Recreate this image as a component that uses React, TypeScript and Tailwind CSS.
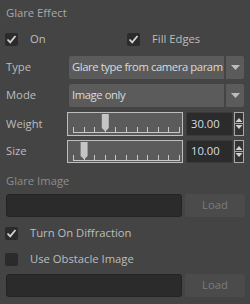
import React from "react";

const font = { fontFamily: '"Open Sans", "Liberation Sans", sans-serif' };

const Check = ({ checked }: { checked: boolean }) => (
  <div className="w-[13px] h-[13px] bg-[#2b2b2b] rounded-[2px] flex items-center justify-center shrink-0">
    {checked && (
      <svg width="11" height="11" viewBox="0 0 11 11">
        <path d="M1.5 5.5 L4.2 8.3 L9.5 2" fill="none" stroke="#d4d4d4" strokeWidth="1.8" />
      </svg>
    )}
  </div>
);

const Dropdown = ({ text }: { text: string }) => (
  <div className="flex gap-[2px] h-full ml-auto">
    <div className="w-[155px] bg-[#5b5b5b] rounded-l-[2px] pl-[3px] flex items-center overflow-hidden whitespace-nowrap text-[#dcdcdc] tracking-[-0.4px]">
      {text}
    </div>
    <div className="w-[18px] bg-[#5b5b5b] rounded-r-[2px] flex items-center justify-center">
      <svg width="9" height="5" viewBox="0 0 9 5">
        <path d="M0 0 H9 L4.5 5 Z" fill="#bdbdbd" />
      </svg>
    </div>
  </div>
);

const Slider = ({ value }: { value: number }) => {
  const ticks = Array.from({ length: 11 }, (_, i) => 5 + i * 10.6);
  const hx = 5.5 + (value / 100) * 106;
  return (
    <div className="w-[116px] h-full border border-[#bdbdbd] bg-[#5b5b5b] relative">
      <svg width="114" height="22" viewBox="0 0 114 22" className="absolute left-0 top-0">
        <line x1={ticks[0]} y1="19.5" x2={ticks[10] + 0.5} y2="19.5" stroke="#c8c8c8" strokeWidth="1" />
        {ticks.map((t, i) => (
          <line key={i} x1={Math.round(t) + 0.5} y1="14" x2={Math.round(t) + 0.5} y2="20" stroke="#c8c8c8" strokeWidth="1" />
        ))}
        <path d={`M${hx - 3.5} 1 H${hx + 3.5} V15 L${hx} 18.5 L${hx - 3.5} 15 Z`} fill="#c4c4c4" />
      </svg>
    </div>
  );
};

const NumberField = ({ value }: { value: string }) => (
  <div className="flex h-full ml-[3px] gap-[1px]">
    <div className="w-[47px] bg-[#2b2b2b] border border-[#3a3a3a] rounded-[2px] flex items-center pl-[4px] text-[#d6dde6]">
      {value}
    </div>
    <div className="w-[10px] border border-[#a8a8a8] bg-[#333] flex flex-col">
      <svg width="8" height="20" viewBox="0 0 8 20">
        <path d="M0.5 9 L4 5 L7.5 9 Z" fill="#d0d0d0" />
        <line x1="0" y1="10.5" x2="8" y2="10.5" stroke="#a8a8a8" />
        <path d="M0.5 12 L4 16 L7.5 12 Z" fill="#d0d0d0" />
      </svg>
    </div>
  </div>
);

const FileRow = () => (
  <div className="flex h-[23px] items-stretch">
    <div className="w-[176px] ml-px bg-[#2b2b2b] border border-[#232323] rounded-[3px]" />
    <div className="ml-[3px] w-[60px] bg-[#4b4b4b] rounded-[2px] flex items-center justify-center text-[#7c7c7c]">
      Load
    </div>
  </div>
);

export default function App() {
  return (
    <div className="w-[250px] h-[304px] bg-[#444444] px-[5px] text-[11.25px] text-[#bdbdbd] flex flex-col overflow-hidden" style={font}>
      <div className="h-[26px] flex items-center pl-px text-[#a8a8a8]">Glare Effect</div>

      <div className="mt-[7px] h-[13px] flex items-center">
        <div className="w-[122px] flex items-center">
          <Check checked />
          <span className="ml-[12px]">On</span>
        </div>
        <Check checked />
        <span className="ml-[12px]">Fill Edges</span>
      </div>

      <div className="mt-[10px] h-[23px] flex items-center">
        <span className="pl-px">Type</span>
        <div className="ml-auto h-full pr-px">
          <Dropdown text="Glare type from camera param" />
        </div>
      </div>

      <div className="mt-[5px] h-[23px] flex items-center">
        <span className="pl-px">Mode</span>
        <div className="ml-auto h-full pr-px">
          <Dropdown text="Image only" />
        </div>
      </div>

      <div className="mt-[5px] h-[24px] flex items-center">
        <span className="pl-px w-[62px]">Weight</span>
        <Slider value={30} />
        <NumberField value="30.00" />
      </div>

      <div className="mt-[4px] h-[23px] flex items-center">
        <span className="pl-px w-[62px]">Size</span>
        <Slider value={10} />
        <NumberField value="10.00" />
      </div>

      <div className="mt-[9px] h-[18px] flex items-center pl-px text-[#8e8e8e]">Glare Image</div>

      <div className="mt-[4px]">
        <FileRow />
      </div>

      <div className="mt-[10px] h-[13px] flex items-center">
        <Check checked />
        <span className="ml-[12px]">Turn On Diffraction</span>
      </div>

      <div className="mt-[13px] h-[13px] flex items-center">
        <Check checked={false} />
        <span className="ml-[12px]">Use Obstacle Image</span>
      </div>

      <div className="mt-[8px]">
        <FileRow />
      </div>
    </div>
  );
}
